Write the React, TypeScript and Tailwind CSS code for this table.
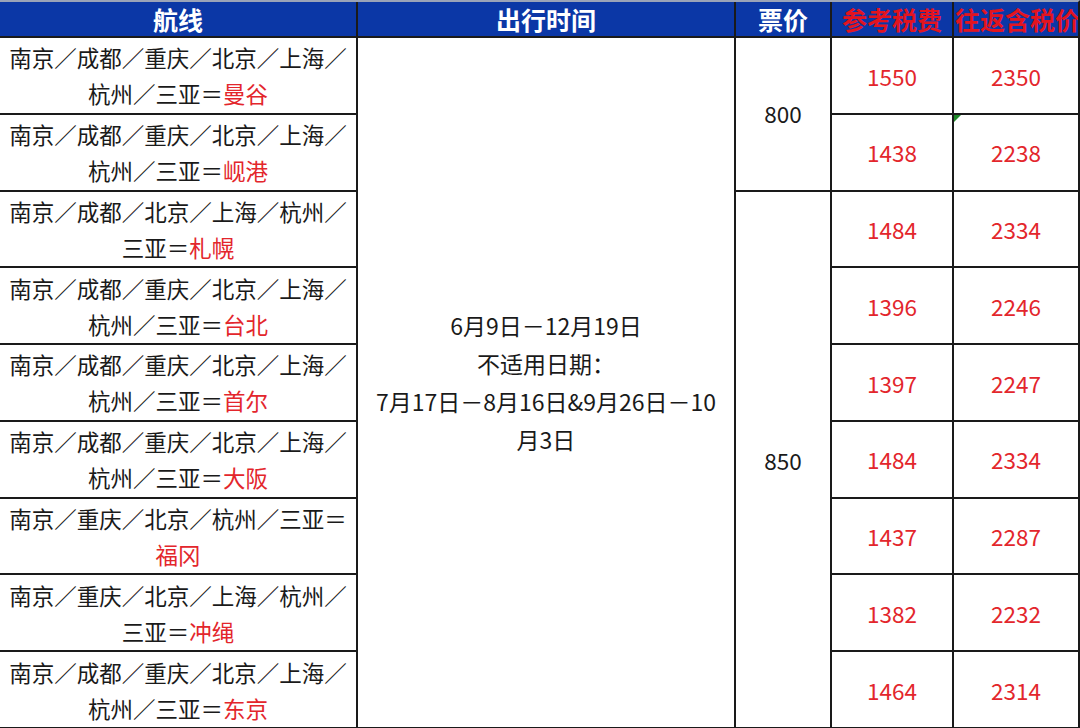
import React from "react";

const routes: { a: string; b: string; c: string }[] = [
  { a: "南京／成都／重庆／北京／上海／", b: "杭州／三亚＝", c: "曼谷" },
  { a: "南京／成都／重庆／北京／上海／", b: "杭州／三亚＝", c: "岘港" },
  { a: "南京／成都／北京／上海／杭州／", b: "三亚＝", c: "札幌" },
  { a: "南京／成都／重庆／北京／上海／", b: "杭州／三亚＝", c: "台北" },
  { a: "南京／成都／重庆／北京／上海／", b: "杭州／三亚＝", c: "首尔" },
  { a: "南京／成都／重庆／北京／上海／", b: "杭州／三亚＝", c: "大阪" },
  { a: "南京／重庆／北京／杭州／三亚＝", b: "", c: "福冈" },
  { a: "南京／重庆／北京／上海／杭州／", b: "三亚＝", c: "冲绳" },
  { a: "南京／成都／重庆／北京／上海／", b: "杭州／三亚＝", c: "东京" },
];

const taxes: [string, string][] = [
  ["1550", "2350"],
  ["1438", "2238"],
  ["1484", "2334"],
  ["1396", "2246"],
  ["1397", "2247"],
  ["1484", "2334"],
  ["1437", "2287"],
  ["1382", "2232"],
  ["1464", "2314"],
];

const rowStart = [
  "row-start-2",
  "row-start-3",
  "row-start-4",
  "row-start-5",
  "row-start-6",
  "row-start-7",
  "row-start-8",
  "row-start-9",
  "row-start-10",
];

export default function App() {
  const font = { fontFamily: '"Noto Sans CJK SC", "Noto Sans", sans-serif' };
  return (
    <div className="w-[1080px] h-[728px] bg-white overflow-hidden" style={font}>
      <div className="w-[1080px] h-[728px] border-t-2 border-t-[#9aa3b8] border-r-2 border-r-[#1a1a1a] border-b border-b-[#1a1a1a] bg-[#1a1a1a] grid grid-cols-[356px_376px_94px_120px_minmax(0,1fr)] grid-rows-[34px_repeat(9,minmax(0,1fr))] gap-[2px] text-[22.5px] text-[#1a1a1a]">
        {/* header */}
        <div className="col-start-1 row-start-1 bg-[#0b37a6] text-white text-[25px] font-bold flex items-center justify-center leading-none">航线</div>
        <div className="col-start-2 row-start-1 bg-[#0b37a6] text-white text-[25px] font-bold flex items-center justify-center leading-none">出行时间</div>
        <div className="col-start-3 row-start-1 bg-[#0b37a6] text-white text-[25px] font-bold flex items-center justify-center leading-none">票价</div>
        <div className="col-start-4 row-start-1 bg-[#0b37a6] text-[#e3141f] text-[25px] font-bold flex items-center justify-center leading-none whitespace-nowrap overflow-hidden">参考税费</div>
        <div className="col-start-5 row-start-1 bg-[#0b37a6] text-[#e3141f] text-[25px] font-bold flex items-center justify-start pl-[1px] leading-none whitespace-nowrap overflow-hidden">往返含税价</div>

        {/* routes */}
        {routes.map((r, i) => (
          <div
            key={"r" + i}
            className={`col-start-1 ${rowStart[i]} bg-white flex flex-col items-center justify-center leading-[36px] whitespace-nowrap`}
          >
            <span>{r.a}</span>
            <span>
              {r.b}
              <span className="text-[#e3262c]">{r.c}</span>
            </span>
          </div>
        ))}

        {/* dates */}
        <div className="col-start-2 row-start-2 row-span-9 bg-white flex flex-col items-center justify-center leading-[38px] pb-[2px] text-[23px]">
          <span>6月9日－12月19日</span>
          <span>不适用日期：</span>
          <span>7月17日－8月16日&amp;9月26日－10</span>
          <span>月3日</span>
        </div>

        {/* prices */}
        <div className="col-start-3 row-start-2 row-span-2 bg-white flex items-center justify-center">800</div>
        <div className="col-start-3 row-start-4 row-span-7 bg-white flex items-center justify-center pt-[4px]">850</div>

        {/* taxes */}
        {taxes.map((t, i) => (
          <React.Fragment key={"t" + i}>
            <div className={`col-start-4 ${rowStart[i]} bg-white flex items-center justify-center text-[#e3262c] pt-[2px]`}>{t[0]}</div>
            <div className={`col-start-5 ${rowStart[i]} bg-white flex items-center justify-center text-[#e3262c] pt-[2px] relative`}>
              {i === 1 && (
                <span className="absolute left-0 top-0 w-0 h-0 border-t-[7px] border-t-[#1f8a2a] border-r-[7px] border-r-transparent" />
              )}
              {t[1]}
            </div>
          </React.Fragment>
        ))}
      </div>
    </div>
  );
}
